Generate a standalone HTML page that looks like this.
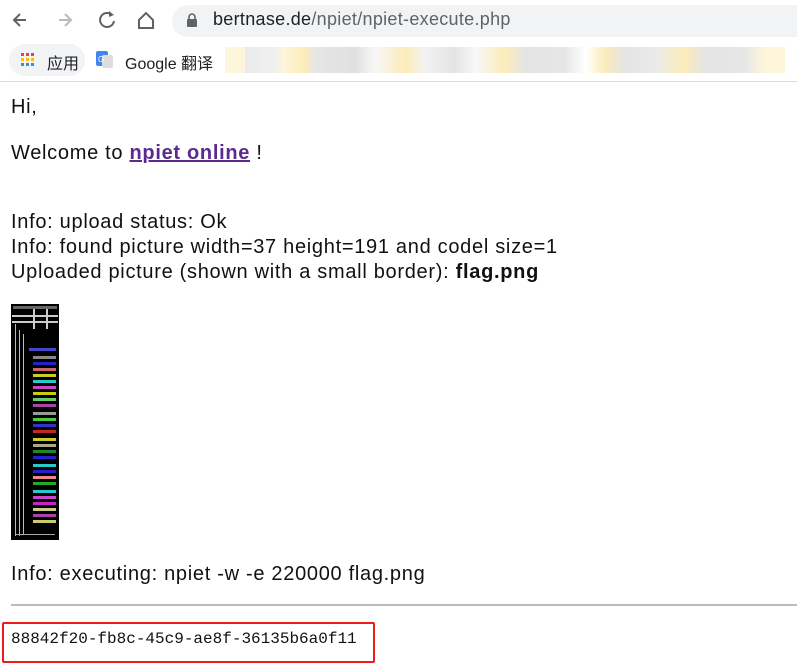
<!DOCTYPE html>
<html><head><meta charset="utf-8"><style>
*{margin:0;padding:0;box-sizing:border-box}
body{width:797px;height:671px;background:#fff;position:relative;overflow:hidden;font-family:"Liberation Sans","Noto Sans CJK SC",sans-serif;color:#111}
.a{position:absolute;white-space:nowrap}
.t{font-size:20px;line-height:25px;left:11px;letter-spacing:0.7px}
</style></head><body>
<svg class="a" style="left:0;top:0" width="170" height="40">
<path d="M26 20h-12M20 14l-6 6 6 6" stroke="#5f6368" stroke-width="2" fill="none"/>
<path d="M59 20h12M65 14l6 6-6 6" stroke="#bbb" stroke-width="2" fill="none"/>
<path d="M112 15a7 7 0 1 0 2 6" stroke="#5f6368" stroke-width="2" fill="none"/><path d="M109 11l5 4-5 2z" fill="#5f6368"/>
<path d="M139 20l7-7 7 7v8h-14z" stroke="#5f6368" stroke-width="2" fill="none"/>
</svg>
<div class="a" style="left:172px;top:5px;width:625px;height:32px;background:#f1f3f4;border-radius:16px 0 0 16px"></div>
<svg class="a" style="left:186px;top:13px" width="12" height="14"><rect x="1" y="6" width="10" height="8" rx="1" fill="#5f6368"/><path d="M3 7V4a3 3 0 0 1 6 0v3" stroke="#5f6368" stroke-width="1.6" fill="none"/></svg>
<div class="a" style="left:213px;top:9px;font-size:18px;letter-spacing:0.3px;color:#202124">bertnase.de<span style="color:#5f6368">/npiet/npiet-execute.php</span></div>
<div class="a" style="left:9px;top:44px;width:76px;height:32px;background:#f1f3f4;border-radius:16px"></div>
<svg class="a" style="left:20px;top:52px" width="16" height="16">
<g fill="#ea4335"><rect x="1" y="1" width="3" height="3"/><rect x="6" y="1" width="3" height="3"/><rect x="11" y="1" width="3" height="3"/></g>
<g fill="#fbbc04"><rect x="1" y="6" width="3" height="3"/><rect x="6" y="6" width="3" height="3"/><rect x="11" y="6" width="3" height="3"/></g>
<g fill="#34a853"><rect x="1" y="11" width="3" height="3"/></g><g fill="#4285f4"><rect x="6" y="11" width="3" height="3"/><rect x="11" y="11" width="3" height="3"/></g></svg>
<div class="a" style="left:47px;top:50px;font-size:16px;color:#202124">应用</div>
<svg class="a" style="left:96px;top:51px" width="18" height="18"><rect x="0" y="0" width="12" height="15" rx="2" fill="#4285f4"/><rect x="6" y="4" width="11" height="13" rx="2" fill="#ddd"/><text x="2" y="11" font-size="8" fill="#fff" font-family="Liberation Sans">G</text></svg>
<div class="a" style="left:125px;top:50px;font-size:16px;color:#202124">Google 翻译</div>
<div class="a" style="left:225px;top:47px;width:560px;height:26px;background:linear-gradient(90deg,#fdf3d0 0,#fdf3d0 20px,#e5e5e5 20px,#ececec 50px,#fdf3d0 60px,#fbe7a8 80px,#e0e0e0 90px,#d8d8d8 130px,#f5f5f5 150px,#fbe7a8 180px,#eee 200px,#ddd 230px,#f5f5f5 250px,#fbe7a8 280px,#ddd 300px,#e0e0e0 340px,#fff 360px,#fbe7a8 380px,#ddd 400px,#e5e5e5 430px,#fbe7a8 460px,#ddd 480px,#e0e0e0 520px,#fdf3d0 540px);opacity:.8"></div>
<div class="a" style="left:0;top:81px;width:797px;height:1px;background:#ddd"></div>

<div class="a t" style="top:95px">Hi,</div>
<div class="a t" style="top:141px">Welcome to <b style="color:#5b2a8f;text-decoration:underline">npiet online</b> !</div>
<div class="a t" style="top:210px">Info: upload status: Ok</div>
<div class="a t" style="top:235px">Info: found picture width=37 height=191 and codel size=1</div>
<div class="a t" style="top:260px">Uploaded picture (shown with a small border): <b>flag.png</b></div>

<svg class="a" style="left:11px;top:304px" width="48" height="236">
<rect width="48" height="236" fill="#000"/>
<rect x="1" y="11" width="46" height="2" fill="#ccc"/><rect x="1" y="17" width="46" height="2" fill="#ccc"/>
<rect x="4" y="20" width="1" height="212" fill="#bbb"/><rect x="8" y="26" width="1" height="206" fill="#bbb"/><rect x="12" y="30" width="1" height="200" fill="#bbb"/>
<rect x="2" y="2" width="44" height="3" fill="#666"/><rect x="22" y="5" width="2" height="20" fill="#ccc"/><rect x="35" y="5" width="2" height="20" fill="#ccc"/>
<g>
<rect x="18" y="44" width="27" height="3" fill="#44c"/><rect x="22" y="52" width="23" height="3" fill="#888"/><rect x="22" y="58" width="23" height="3" fill="#22c"/><rect x="22" y="64" width="23" height="3" fill="#c66"/>
<rect x="22" y="70" width="23" height="3" fill="#cc2"/><rect x="22" y="76" width="23" height="3" fill="#2cc"/><rect x="22" y="82" width="23" height="3" fill="#c4c"/><rect x="22" y="88" width="23" height="3" fill="#cc0"/>
<rect x="22" y="94" width="23" height="3" fill="#6c6"/><rect x="22" y="100" width="23" height="3" fill="#a4a"/><rect x="22" y="108" width="23" height="3" fill="#999"/><rect x="22" y="114" width="23" height="3" fill="#4c4"/>
<rect x="22" y="120" width="23" height="3" fill="#33c"/><rect x="22" y="126" width="23" height="3" fill="#c22"/><rect x="22" y="134" width="23" height="3" fill="#cc2"/><rect x="22" y="140" width="23" height="3" fill="#aa8"/>
<rect x="22" y="146" width="23" height="3" fill="#282"/><rect x="22" y="152" width="23" height="3" fill="#22c"/><rect x="22" y="160" width="23" height="3" fill="#2cc"/><rect x="22" y="166" width="23" height="3" fill="#22c"/>
<rect x="22" y="172" width="23" height="3" fill="#e88"/><rect x="22" y="178" width="23" height="3" fill="#2a2"/><rect x="22" y="186" width="23" height="3" fill="#2cc"/><rect x="22" y="192" width="23" height="3" fill="#c4c"/>
<rect x="22" y="198" width="23" height="3" fill="#c2c"/><rect x="22" y="204" width="23" height="3" fill="#cc8"/><rect x="22" y="210" width="23" height="3" fill="#a4a"/><rect x="22" y="216" width="23" height="3" fill="#cc6"/>
</g>
<rect x="4" y="230" width="40" height="1" fill="#aaa"/>
</svg>

<div class="a t" style="top:562px">Info: executing: npiet -w -e 220000 flag.png</div>
<div class="a" style="left:11px;top:604px;width:786px;height:2px;background:#bbb"></div>
<div class="a" style="left:2px;top:622px;width:373px;height:41px;border:2px solid #f01c1c;border-radius:2px"></div>
<div class="a" style="left:11px;top:630px;font-family:'Liberation Mono',monospace;font-size:16px;color:#111">88842f20-fb8c-45c9-ae8f-36135b6a0f11</div>
</body></html>
